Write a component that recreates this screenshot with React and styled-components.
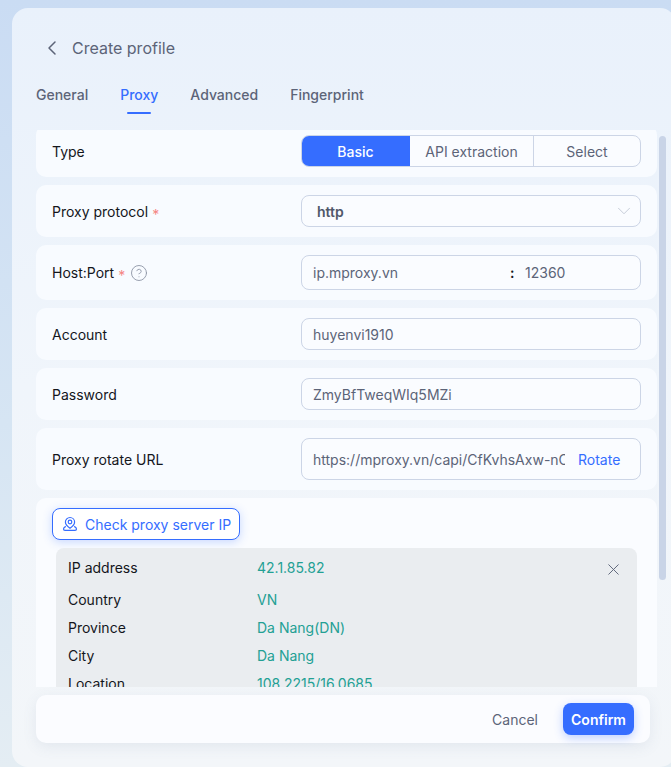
import React from "react";
import styled, { createGlobalStyle } from "styled-components";
import { ChevronLeft, ChevronDown, X, CircleHelp } from "lucide-react";

const Global = createGlobalStyle`
  html, body { margin: 0; padding: 0; height: 100%; }
  body { font-family: Inter, "Liberation Sans", sans-serif; overflow: hidden; }
  * { box-sizing: border-box; }
`;
const Page = styled.div`
  width: 671px; height: 767px; padding: 8px 0 0 12px;
  background: linear-gradient(180deg, #cadcf3 0%, #d6e5f3 55%, #e4edf3 100%);
  overflow: hidden;
`;
const Panel = styled.div`
  position: relative;
  width: 664px; height: 759px;
  border-radius: 16px;
  background: linear-gradient(180deg, #e9f1fb 0%, #f0f5fb 50%, #f3f6f9 100%);
  padding: 24px 0 0 24px;
  display: flex; flex-direction: column;
`;
const Header = styled.div`
  height: 32px; display: flex; align-items: center; gap: 8px; color: #5c6478;
  font-size: 16px; margin-left: 4px;
`;
const Tabs = styled.div`
  display: flex; gap: 32px; margin-top: 14px; height: 46px; padding-top: 8px;
`;
const Tab = styled.div`
  position: relative; height: 20px; font-size: 14px; line-height: 17px; font-weight: 500;
  color: ${p => (p.$active ? "#356dff" : "#5c6478")};
  ${p => p.$active && `
    &::after { content: ""; position: absolute; left: 7px; right: 7px; top: 26px; height: 2px; background: #356dff; border-radius: 1px; }
  `}
`;
const Scroller = styled.div`
  width: 621px; height: 557px; overflow: hidden; margin-top: 6px;
`;
const List = styled.div`
  display: flex; flex-direction: column; gap: 8px; margin-top: -5px;
`;
const Row = styled.div`
  min-height: 52px; padding: 10px 16px; background: #f8fbff; border-radius: 10px;
  display: flex; align-items: center;
`;
const Label = styled.div`
  width: 249px; font-size: 14px; color: #14161c; display: flex; align-items: center; gap: 4px; flex: none;
`;
const Required = styled.span`
  color: #f58583; font-size: 14px; line-height: 14px; padding-top: 7px;
`;
const HelpIcon = styled(CircleHelp)`
  margin-left: 1px; color: #8d95a6;
`;
const Segments = styled.div`
  width: 340px; height: 32px; display: grid; grid-template-columns: 108px 123px 107px;
  border: 1px solid #ccd5e6; border-radius: 8px; overflow: hidden; background: #fafcff;
`;
const Segment = styled.div`
  display: flex; align-items: center; justify-content: center; font-size: 14px;
  margin: ${p => (p.$active ? "-1px 0 -1px -1px" : "0")};
  background: ${p => (p.$active ? "#356dff" : "transparent")};
  color: ${p => (p.$active ? "#fff" : "#5c6478")};
  font-weight: ${p => (p.$active ? 500 : 400)};
  border-left: ${p => (p.$divider ? "1px solid #ccd5e6" : "none")};
`;
const Field = styled.div`
  width: 340px; height: ${p => p.$h || 32}px; border: 1px solid #ccd5e6; border-radius: 8px;
  background: #fafcff; display: flex; align-items: center; padding: 0 11px;
  font-size: 14px; color: #5c6478;
`;
const SelectValue = styled.span`
  flex: 1; font-weight: 600; padding-left: 4px; color: #50586a;
`;
const SelectChevron = styled(ChevronDown)`
  margin-right: -6px; color: #b4bccb;
`;
const HostPart = styled.span`
  width: 197px; flex: none;
`;
const Colon = styled.span`
  width: 15px; color: #14161c; font-weight: 600; flex: none;
`;
const Url = styled.span`
  width: 252px; overflow: hidden; white-space: nowrap; flex: none;
`;
const RotateLink = styled.span`
  margin-left: 13px; color: #356dff;
`;
const CheckBlock = styled.div`
  padding: 10px 16px 0; background: #fafcff; border-radius: 10px; height: 240px;
`;
const CheckButton = styled.div`
  width: 188px; height: 32px; display: flex; align-items: center; gap: 7px; padding-left: 9px;
  border: 1px solid #356dff; border-radius: 8px; background: #fff; color: #356dff; font-size: 14px;
  box-shadow: 0 2px 10px rgba(53, 109, 255, 0.25); white-space: nowrap;
`;
const InfoBox = styled.div`
  position: relative; width: 581px; height: 180px; margin: 8px 0 0 4px; padding: 9px 12px 0;
  background: #eaedf0; border-radius: 8px;
`;
const InfoRow = styled.div`
  display: flex; height: 28px; align-items: center; font-size: 14px; color: #14161c;
  margin-bottom: ${p => (p.$first ? 4 : 0)}px;
  margin-top: ${p => (p.$first ? -4 : 0)}px;
`;
const InfoKey = styled.span`
  width: 189px; flex: none;
`;
const InfoValue = styled.span`
  color: #23a094;
`;
const Close = styled.div`
  position: absolute; top: 12px; right: 14px; color: #5c6478; display: flex;
`;
const Thumb = styled.div`
  position: absolute; left: 647px; top: 128px; width: 7px; height: 444px;
  background: #c9d4e7; border-radius: 4px;
`;
const Footer = styled.div`
  width: 614px; height: 48px; margin-top: 8px; background: #fbfcff; border-radius: 10px;
  display: flex; align-items: center; justify-content: flex-end; padding-right: 16px; gap: 25px;
  box-shadow: 0 4px 14px rgba(90, 110, 150, 0.1);
`;
const Cancel = styled.div`
  font-size: 14px; color: #5c6478;
`;
const Confirm = styled.div`
  width: 71px; height: 32px; border-radius: 8px; background: #356dff; color: #fff; font-size: 14px; font-weight: 600;
  display: flex; align-items: center; justify-content: center;
  box-shadow: 0 3px 10px rgba(53, 109, 255, 0.3);
`;

const PinIcon = () => (
  <svg width="16" height="16" viewBox="0 0 16 16" fill="none" stroke="currentColor" strokeWidth="1.2">
    <path d="M8 1.5a4.6 4.6 0 0 1 4.6 4.6C12.6 9 9.6 11.2 8 12.2 6.4 11.2 3.4 9 3.4 6.1A4.6 4.6 0 0 1 8 1.5Z" />
    <circle cx="8" cy="6" r="1.8" />
    <path d="M3.8 10.4C2.6 11 1.5 11.9 1.5 13c0 .8.7 1.4 1.5 1.4h10c.8 0 1.5-.6 1.5-1.4 0-1.1-1.1-2-2.3-2.6" />
  </svg>
);

export default function App() {
  return (
    <Page>
      <Global />
      <Panel>
        <Header><ChevronLeft size={24} strokeWidth={1.5} /><span>Create profile</span></Header>
        <Tabs>
          <Tab>General</Tab>
          <Tab $active>Proxy</Tab>
          <Tab>Advanced</Tab>
          <Tab>Fingerprint</Tab>
        </Tabs>
        <Scroller>
          <List>
            <Row>
              <Label>Type</Label>
              <Segments>
                <Segment $active>Basic</Segment>
                <Segment>API extraction</Segment>
                <Segment $divider>Select</Segment>
              </Segments>
            </Row>
            <Row>
              <Label>Proxy protocol <Required>*</Required></Label>
              <Field>
                <SelectValue>http</SelectValue>
                <SelectChevron size={22} strokeWidth={0.8} />
              </Field>
            </Row>
            <Row>
              <Label>Host:Port <Required>*</Required><HelpIcon size={18} strokeWidth={1.2} /></Label>
              <Field $h={35}><HostPart>ip.mproxy.vn</HostPart><Colon>:</Colon><span>12360</span></Field>
            </Row>
            <Row>
              <Label>Account</Label>
              <Field>huyenvi1910</Field>
            </Row>
            <Row>
              <Label>Password</Label>
              <Field>ZmyBfTweqWIq5MZi</Field>
            </Row>
            <Row>
              <Label>Proxy rotate URL</Label>
              <Field $h={42}><Url>https://mproxy.vn/capi/CfKvhsAxw-nOYz</Url><RotateLink>Rotate</RotateLink></Field>
            </Row>
            <CheckBlock>
              <CheckButton><PinIcon />Check proxy server IP</CheckButton>
              <InfoBox>
                <Close><X size={19} strokeWidth={1.2} /></Close>
                <InfoRow $first><InfoKey>IP address</InfoKey><InfoValue>42.1.85.82</InfoValue></InfoRow>
                <InfoRow><InfoKey>Country</InfoKey><InfoValue>VN</InfoValue></InfoRow>
                <InfoRow><InfoKey>Province</InfoKey><InfoValue>Da Nang(DN)</InfoValue></InfoRow>
                <InfoRow><InfoKey>City</InfoKey><InfoValue>Da Nang</InfoValue></InfoRow>
                <InfoRow><InfoKey>Location</InfoKey><InfoValue>108.2215/16.0685</InfoValue></InfoRow>
              </InfoBox>
            </CheckBlock>
          </List>
        </Scroller>
        <Thumb />
        <Footer><Cancel>Cancel</Cancel><Confirm>Confirm</Confirm></Footer>
      </Panel>
    </Page>
  );
}
